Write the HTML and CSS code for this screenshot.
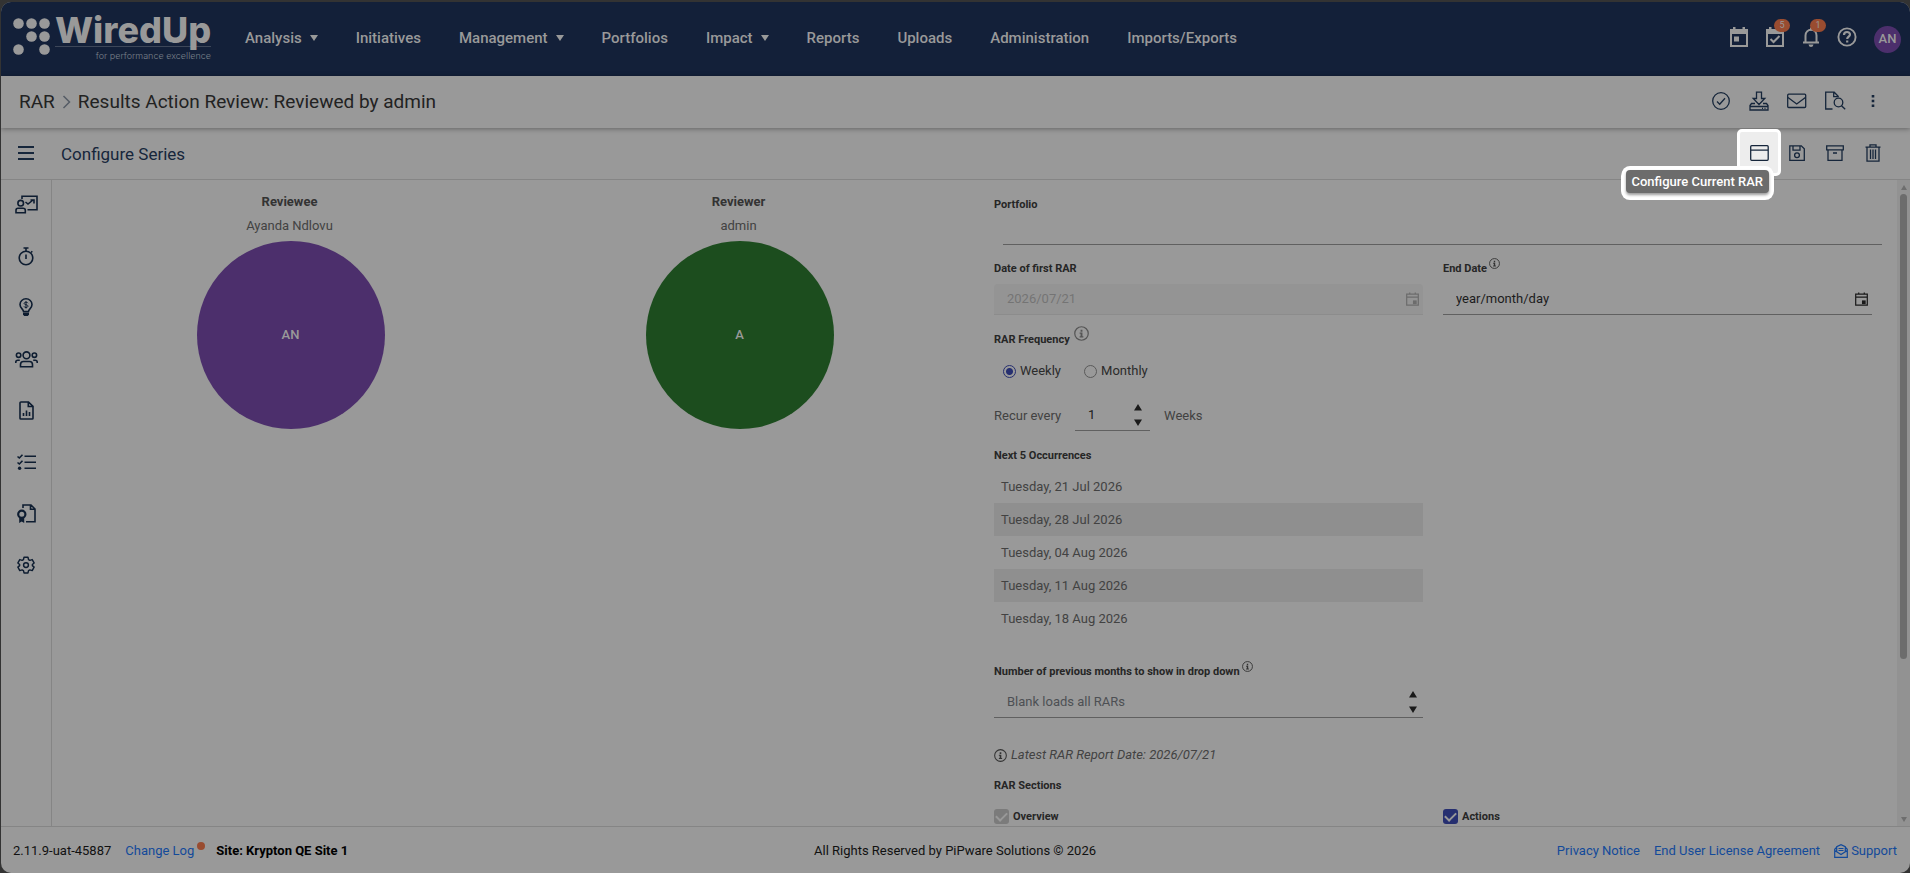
FILE: index.html
```html
<!DOCTYPE html>
<html lang="en">
<head>
<meta charset="utf-8">
<title>WiredUp - Results Action Review</title>
<link rel="stylesheet" href="styles.css">
</head>
<body>
<svg class="defs" aria-hidden="true">
  <symbol id="info" viewBox="0 0 16 16"><circle cx="8" cy="8" r="7.2" fill="none" stroke="currentColor" stroke-width="1.3"/><path d="M7 4h2v2H7zM6 7h3v4h1v1.2H6V11h1V8.200H6z" fill="currentColor"/></symbol>
  <symbol id="cal" viewBox="0 0 14 15"><path d="M.75 2.200h12.500v12H.75zM.75 5.500h12.500M4 .4v2M10 .4v2" fill="none" stroke="currentColor" stroke-width="1.3"/><path d="M7.500 9h4v4h-4z" fill="currentColor"/></symbol>
  <symbol id="spin" viewBox="0 0 8 22"><path d="M4 0l4 6.500H0zM0 15.500h8L4 22z" fill="currentColor"/></symbol>
</svg>
<div class="window">
  <header class="topbar">
    <a class="logo" href="#" aria-label="WiredUp home">
      <svg class="logo-dots" viewBox="0 0 38 38"><g fill="currentColor"><circle cx="5.500" cy="5.500" r="5.300"/><circle cx="18.500" cy="5.500" r="5.300"/><circle cx="31.500" cy="5.500" r="5.300"/><circle cx="18.500" cy="18.500" r="5.300"/><circle cx="31.500" cy="18.500" r="5.300"/><circle cx="5.500" cy="31.500" r="5.300"/><circle cx="31.500" cy="31.500" r="5.300"/></g></svg>
      <span class="logo-text"><span class="logo-name">WiredUp</span><span class="logo-tag">for performance excellence</span></span>
    </a>
    <nav class="menu">
      <a href="#">Analysis<i class="caret"></i></a>
      <a href="#">Initiatives</a>
      <a href="#">Management<i class="caret"></i></a>
      <a href="#">Portfolios</a>
      <a href="#">Impact<i class="caret"></i></a>
      <a href="#">Reports</a>
      <a href="#">Uploads</a>
      <a href="#">Administration</a>
      <a href="#">Imports/Exports</a>
    </nav>
    <div class="top-icons">
      <button class="top-btn" aria-label="Calendar"><svg width="18" height="20" viewBox="0 0 18 20"><path d="M1 3h16v16H1z" fill="none" stroke="currentColor" stroke-width="2"/><path d="M0 2h18v5H0zM3 0h2.500v3H3zM12.500 0H15v3h-2.500zM4 9.500h5v5H4z" fill="currentColor"/></svg></button>
      <button class="top-btn" aria-label="Tasks"><svg width="18" height="20" viewBox="0 0 18 20"><path d="M1 3h16v16H1zM4.500 12l3 3 6-6" fill="none" stroke="currentColor" stroke-width="2"/><path d="M0 2h18v5H0zM3 0h2.500v3H3zM12.500 0H15v3h-2.500z" fill="currentColor"/></svg><span class="badge">5</span></button>
      <button class="top-btn" aria-label="Notifications"><svg width="18" height="20" viewBox="0 0 18 20"><path d="M1 15.500h16M3.500 15V8.500C3.500 5 6 2.800 9 2.800s5.500 2.200 5.500 5.700V15" fill="none" stroke="currentColor" stroke-width="2"/><path d="M8 .5h2v3H8zM6.500 17.500h5Q11 20 9 20t-2.500-2.500z" fill="currentColor"/></svg><span class="badge">1</span></button>
      <button class="top-btn" aria-label="Help"><svg width="20" height="20" viewBox="0 0 20 20"><circle cx="10" cy="10" r="8.600" fill="none" stroke="currentColor" stroke-width="1.900"/><path d="M7 8c0-4 6-3.800 6-.4 0 2-2.800 2.100-2.800 4.400M10.200 13.400v2" fill="none" stroke="currentColor" stroke-width="2.200"/></svg></button>
      <button class="avatar-small">AN</button>
    </div>
  </header>

  <div class="titlebar">
    <h1 class="crumbs"><a href="#">RAR</a><svg width="9" height="14" viewBox="0 0 9 14"><path d="M1.500 1l6 6-6 6" fill="none" stroke="currentColor" stroke-width="1.500"/></svg><span>Results Action Review: Reviewed by admin</span></h1>
    <div class="tools">
      <button class="tool" aria-label="Approve"><svg width="18" height="18" viewBox="0 0 18 18"><circle cx="9" cy="9" r="8.300"/><path d="M5 9.500l2.700 2.700L13 6.200"/></svg></button>
      <button class="tool" aria-label="Download"><svg width="20" height="20" viewBox="0 0 20 20"><path d="M7.500 1.200h5v6.300h3.300L10 13.500 4.200 7.500h3.300zM6 12.500H2.500L1 14.500V19h18v-4.500l-1.500-2H14M1 15.500h18M13 17.300h1M15.500 17.300h1"/></svg></button>
      <button class="tool" aria-label="Email"><svg width="20" height="16" viewBox="0 0 20 16"><rect x=".7" y="1.200" width="18" height="13.300" rx="1"/><path d="M1 4.500l8.700 6.500 8.700-6.500"/></svg></button>
      <button class="tool" aria-label="Preview"><svg width="22" height="20" viewBox="0 0 22 20"><path d="M8.500 18H1.700V1.200h8.500l4 4v1M9.700 1.500v4.200h4"/><circle cx="14.500" cy="11.500" r="4.300"/><path d="M17.500 14.700l3.700 3.600"/></svg></button>
      <button class="tool" aria-label="More"><svg width="4" height="12" viewBox="0 0 4 12"><path class="solid" d="M.7 0h2.600v2.600H.7zM.7 4.700h2.600v2.600H.7zM.7 9.400h2.600V12H.7z"/></svg></button>
    </div>
  </div>

  <div class="subbar">
    <button class="hamburger" aria-label="Toggle menu"><svg width="16" height="14" viewBox="0 0 16 14"><path d="M0 1h16M0 7h16M0 13h16" stroke="currentColor" stroke-width="2"/></svg></button>
    <h2 class="subtitle">Configure Series</h2>
    <div class="tools">
      <button class="tool current" aria-label="Configure Current RAR"><svg width="19" height="16" viewBox="0 0 19 16"><rect x=".7" y=".7" width="17.500" height="14.600" rx="1"/><path d="M1 5.200h17"/></svg><span class="tooltip" role="tooltip">Configure Current RAR</span></button>
      <button class="tool" aria-label="Save"><svg width="16" height="16" viewBox="0 0 16 16"><path d="M.8.8h11.500l3 3v11.500H.8zM4 1v4.200h7V1"/><circle cx="8" cy="10.300" r="2.400"/></svg></button>
      <button class="tool" aria-label="Archive"><svg width="18" height="16" viewBox="0 0 18 16"><path d="M.7.800h16.600v4H.7zM2 5v10.300h14V5M7 8h4"/></svg></button>
      <button class="tool" aria-label="Delete"><svg width="16" height="18" viewBox="0 0 16 18"><path d="M.5 3.200h15M5 3V.8h6V3M2 3.500v13.700h12V3.500M5.500 5.500v9.500M8 5.500v9.500M10.500 5.500v9.500"/></svg></button>
    </div>
  </div>

  <div class="body">
    <nav class="sidebar">
      <button class="side" aria-label="Presentation"><svg width="23" height="19" viewBox="0 0 23 19"><path d="M7 4V1.200h15v13.500h-9.500"/><circle cx="5.700" cy="8.200" r="2.800"/><path d="M1 17.800v-2.500q0-2 2-2h5q2.300 0 2.300 2v2.500zM10.500 7l2.500 2 5-4M15.500 5H19v3.500"/></svg></button>
      <button class="side" aria-label="Timer"><svg width="16" height="19" viewBox="0 0 16 19"><circle cx="8" cy="11" r="6.800"/><path d="M5.500 1h5M8 1v3M8 7.500v4.500M13 5.500l1.300-1.300"/></svg></button>
      <button class="side" aria-label="Ideas"><svg width="14" height="19" viewBox="0 0 14 19"><path d="M4.500 13.500C4.500 11 1 10.500 1 6.500a6 5.700 0 0 1 12 0c0 4-3.500 4.500-3.500 7z"/><path d="M9 5.200Q8.500 4.200 7 4.200C4.500 4.200 4.500 6.500 7 6.700c2.600.2 2.600 2.800 0 2.800Q5.400 9.500 5 8.400M7 3.200v7.300" stroke-width="1"/><path class="solid" d="M4 14.500h6v2L8.800 18H5.200L4 16.500z"/></svg></button>
      <button class="side" aria-label="Team"><svg width="23" height="17" viewBox="0 0 23 17"><circle cx="11.500" cy="4.300" r="3.400"/><circle cx="3.600" cy="4.200" r="2.200"/><circle cx="19.400" cy="4.200" r="2.200"/><path d="M5.500 15.800v-2.300q0-3 3-3h6q3 0 3 3v2.300zM.8 12v-1q0-1.800 2-1.800h2M22.200 12v-1q0-1.800-2-1.800h-2"/></svg></button>
      <button class="side" aria-label="Reports"><svg width="15" height="19" viewBox="0 0 15 19"><path d="M2 1h7.500L14 5.300v11.900q0 .8-.8.8H1.800q-.8 0-.8-.8V1.800Q1 1 2 1zM9.300 1.300v4.200H14M4.500 15v-3M7.500 15V9.500M10.500 15v-4"/></svg></button>
      <button class="side" aria-label="Checklist"><svg width="19" height="16" viewBox="0 0 19 16"><path d="M7.500 2.300H19M7.500 8.300H19M7.500 14.300H19M.5 2.500L2.300 4 5.500.700M.5 8.500l1.800 1.500 3.200-3.300"/><circle class="solid" cx="2.600" cy="14.200" r="1.700"/></svg></button>
      <button class="side" aria-label="Certificates"><svg width="19" height="19" viewBox="0 0 19 19"><path d="M6 4V1h8l4 4v12.800H9M13.500 1.300v4H18"/><circle cx="4.800" cy="10.200" r="3.600" stroke-width="2.200"/><path class="solid" d="M2.200 13.500h5V19l-2.500-1.500L2.200 19z"/></svg></button>
      <button class="side" aria-label="Settings"><svg width="18" height="18" viewBox="0 0 20 20"><path d="M7.800 1.300h4.400l.6 2.600 1.500.9 2.600-.8 2.100 3.700L17.100 9.500v1.200l1.900 1.700-2.100 3.800-2.600-.8-1.500.9-.6 2.500H7.800l-.6-2.500-1.500-.9-2.600.8L1 12.400l1.900-1.700V9.500L1 7.700 3.100 4l2.600.8 1.500-.9z" stroke-linejoin="round"/><circle cx="10" cy="10.100" r="2.700"/></svg></button>
    </nav>

    <main class="content">
      <section class="people">
        <div class="person"><strong>Reviewee</strong><span>Ayanda Ndlovu</span><div class="avatar purple">AN</div></div>
        <div class="person"><strong>Reviewer</strong><span>admin</span><div class="avatar green">A</div></div>
      </section>

      <form class="form">
        <div class="field portfolio"><label class="label" for="portfolio">Portfolio</label><input class="input" id="portfolio" type="text"></div>
        <div class="pair">
          <div class="field"><label class="label" for="first">Date of first RAR</label>
            <div class="box disabled"><input class="input" id="first" type="text" value="2026/07/21" disabled><svg class="cal"><use href="#cal"/></svg></div></div>
          <div class="field"><label class="label" for="end">End Date<svg class="info"><use href="#info"/></svg></label>
            <div class="box"><input class="input" id="end" type="text" value="year/month/day"><svg class="cal"><use href="#cal"/></svg></div></div>
        </div>
        <div class="field frequency" role="radiogroup" aria-labelledby="freq">
          <span class="label" id="freq">RAR Frequency<svg class="info large"><use href="#info"/></svg></span>
          <div class="radios"><label><input type="radio" name="freq" checked>Weekly</label><label><input type="radio" name="freq">Monthly</label></div>
        </div>
        <div class="recur"><label for="every">Recur every</label><div class="box short"><input class="input" id="every" type="text" inputmode="numeric" value="1"><svg class="spin"><use href="#spin"/></svg></div><span>Weeks</span></div>
        <div class="field occurrences"><span class="label">Next 5 Occurrences</span>
          <ul class="dates"><li>Tuesday, 21 Jul 2026</li><li>Tuesday, 28 Jul 2026</li><li>Tuesday, 04 Aug 2026</li><li>Tuesday, 11 Aug 2026</li><li>Tuesday, 18 Aug 2026</li></ul></div>
        <div class="field months"><label class="label" for="months">Number of previous months to show in drop down<svg class="info"><use href="#info"/></svg></label>
          <div class="box"><input class="input" id="months" type="text" inputmode="numeric" placeholder="Blank loads all RARs"><svg class="spin"><use href="#spin"/></svg></div></div>
        <p class="latest"><svg class="info"><use href="#info"/></svg>Latest RAR Report Date: 2026/07/21</p>
        <div class="sections"><span class="label">RAR Sections</span>
          <div class="pair"><label class="check"><input type="checkbox" checked disabled>Overview</label><label class="check"><input type="checkbox" checked>Actions</label></div></div>
      </form>
    </main>
    <div class="scrollbar" aria-hidden="true"><i class="arrow up"></i><i class="thumb"></i><i class="arrow down"></i></div>
  </div>

  <footer class="footer">
    <div class="foot-left"><span>2.11.9-uat-45887</span><a class="changelog" href="#">Change Log<i class="dot"></i></a><strong>Site: Krypton QE Site 1</strong></div>
    <span>All Rights Reserved by PiPware Solutions © 2026</span>
    <div class="foot-right"><a href="#">Privacy Notice</a><a href="#">End User License Agreement</a><a class="support" href="#"><svg width="14" height="14" viewBox="0 0 14 14"><path d="M.7 5.200L2.500 3.500M13.300 5.200l-1.800-1.700M.7 5v8.300h12.600V5M.7 6.500L7 10.500l6.300-4M2.700 7.500V2.700L7 .7l4.300 2v4.800M4.500 4.500h5M4.500 6.500h5" fill="none" stroke="currentColor" stroke-width="1.200"/></svg>Support</a></div>
  </footer>
</div>
</body>
</html>
```

FILE: styles.css
```css
* { box-sizing: border-box; }
body { margin: 0; background: #333; font-family: Roboto, "Liberation Sans", sans-serif; font-size: 13px; line-height: 16px; color: #424242; }
button { border: 0; padding: 0; background: none; color: inherit; font: inherit; }
a { text-decoration: none; color: inherit; }
h1, h2, p, ul { margin: 0; padding: 0; font-weight: 400; }
.defs { display: none; }

.window { display: flex; flex-direction: column; height: calc(100vh - 2px); margin: 2px 0 0 1px; border-radius: 10px; overflow: hidden; background: #999; }

.topbar { display: flex; align-items: center; flex: none; height: 74px; padding: 0 9px 0 12px; background: #132039; color: #999; }
.logo { display: flex; width: 198px; height: 50px; margin-right: 34px; }
.logo-dots { flex: none; width: 38px; height: 38px; margin: 4px 4px 0 0; }
.logo-text { display: flex; flex-direction: column; width: 156px; }
.logo-name { height: 34px; border-bottom: 1px solid #3d4759; font: 800 36px/32px Inter, sans-serif; }
.logo-tag { font: 300 9px/17px Inter, sans-serif; color: #7a808b; text-align: right; }
.menu { display: flex; align-items: center; flex: 1; gap: 38px; height: 100%; padding-bottom: 2px; font-size: 15px; font-weight: 500; white-space: nowrap; }
.menu a { display: flex; align-items: center; gap: 8px; }
.caret { border: 4px solid transparent; border-top: 6px solid #999; border-bottom: 0; }
.top-icons { display: flex; align-items: center; }
.top-btn { position: relative; display: flex; align-items: center; justify-content: center; width: 36px; height: 26px; padding-bottom: 4px; }
.badge { position: absolute; top: -7px; left: 17px; width: 16px; height: 13px; border-radius: 7px; background: #994c30; font-size: 9px; line-height: 13px; }
.avatar-small { width: 27px; height: 27px; margin-left: 9px; border-radius: 50%; background: #4c2f6c; font-size: 13px; font-weight: 500; }

.titlebar { display: flex; align-items: center; justify-content: space-between; flex: none; position: relative; height: 52px; padding: 0 18px; box-shadow: 0 1px 5px rgba(0,0,0,.35); color: #16263b; }
.crumbs { display: flex; align-items: center; gap: 7px; font-size: 19px; line-height: 24px; color: #222; }
.crumbs svg { color: #555c66; }
.tools { display: flex; }
.tool { position: relative; display: flex; align-items: center; justify-content: center; width: 38px; height: 44px; padding-bottom: 2px; }
.tool svg { position: relative; fill: none; stroke: currentColor; stroke-width: 1.3; }
.tool .solid, .side .solid { fill: currentColor; stroke: none; }

.subbar { display: flex; align-items: center; flex: none; height: 52px; padding-right: 18px; border-bottom: 1px solid #858585; color: #16263b; }
.hamburger { width: 50px; padding-top: 2px; }
.subtitle { flex: 1; padding-left: 10px; font-size: 17px; line-height: 20px; }
.subbar .current::before { content: ""; position: absolute; inset: -3px -3px 0; border: 3px solid #fff; border-radius: 5px; background: #ededed; }
.tooltip { position: absolute; top: 38px; right: 9px; padding: 0 6px; border-radius: 4px; background: #6c6c6c; color: #fff; font-size: 13px; font-weight: 500; line-height: 23px; white-space: nowrap; box-shadow: 0 2px 3px rgba(0,0,0,.4), 0 0 0 4px #fff, 0 2px 0 5px #fff; }

.body { display: flex; flex: 1; min-height: 0; }
.sidebar { display: grid; grid-template-rows: repeat(4, 51px 52px); align-content: start; flex: none; width: 51px; border-right: 1px solid #858585; color: #0e1d31; }
.side { display: flex; align-items: center; justify-content: center; padding-bottom: 2px; }
.side svg { fill: none; stroke: currentColor; stroke-width: 1.6; }

.content { display: grid; grid-template-columns: 1fr 1fr; gap: 21px; flex: 1; min-width: 0; padding: 0 15px 0 13px; overflow: hidden; }
.people { display: grid; grid-template-columns: 1fr 1fr; align-items: start; padding-top: 14px; text-align: center; }
.person { display: flex; flex-direction: column; align-items: center; }
.person strong { margin-bottom: 8px; font-weight: 700; color: #333; }
.avatar { display: grid; place-items: center; width: 188px; height: 188px; margin: 7px 0 0 2px; border-radius: 50%; color: #999; font-weight: 500; }
.purple { background: #4c2f6c; }
.green { background: #1c4d1e; }

.form { padding-top: 17px; }
.field { padding: 0 10px; }
.label { display: flex; align-items: flex-start; height: 16px; font-size: 11px; font-weight: 700; color: #262626; }
.info { flex: none; width: 11px; height: 11px; margin: -3px 0 0 2px; color: #333; }
.info.large { width: 15px; height: 15px; margin: -6px 0 0 4px; color: #555; }
.input { flex: 1; min-width: 0; width: 100%; border: 0; outline: 0; padding: 0; background: none; color: #1c1c1c; font: inherit; }
.input::placeholder { color: #4d5054; opacity: 1; }
.portfolio { padding-right: 0; }
.portfolio .input { display: block; width: calc(100% - 9px); height: 32px; margin-left: 9px; border-bottom: 1px solid #606060; }
.pair { display: grid; grid-template-columns: 1fr 1fr; }
.form > .pair { margin-top: 16px; }
.box { display: flex; align-items: center; height: 31px; margin-top: 7px; padding: 0 4px 0 13px; border-bottom: 1px solid #606060; color: #1a1a1a; }
.box.disabled { border-radius: 4px 4px 0 0; background: #949494; border-color: #8c8c8c; color: #6c6c6c; }
.disabled .input { color: #747474; }
.cal { width: 13px; height: 14px; }
.spin { width: 8px; height: 22px; margin-right: 2px; }
.frequency { margin-top: 17px; }
.radios { display: flex; gap: 23px; margin: 14px 0 0 9px; color: #2b2b2b; }
.radios label { display: flex; align-items: center; gap: 4px; height: 18px; }
.radios input { appearance: none; width: 13px; height: 13px; margin: 0; border: 1px solid #5a5a5a; border-radius: 50%; }
.radios input:checked { border-color: #262f70; background: radial-gradient(#262f70 3px, transparent 4px); }
.recur { display: flex; align-items: center; gap: 14px; margin-top: 20px; padding: 0 10px; }
.box.short { width: 75px; height: 31px; margin-top: 0; padding-right: 6px; }
.occurrences { margin-top: 17px; }
.dates { width: calc(50% - 10px); margin-top: 6px; list-style: none; }
.dates li { height: 33px; padding: 0 7px; line-height: 33px; }
.dates li:nth-child(even) { background: #8f8f8f; }
.months { width: 50%; margin-top: 29px; }
.latest { display: flex; align-items: center; gap: 4px; margin-top: 28px; padding: 0 10px; font-style: italic; line-height: 18px; }
.latest .info { width: 13px; height: 13px; margin: 0; }
.sections { margin-top: 14px; }
.sections > .label { padding: 0 10px; }
.check { display: flex; align-items: center; gap: 4px; height: 15px; margin-top: 15px; padding: 0 10px; font-size: 11px; font-weight: 700; color: #262626; }
.check input { appearance: none; display: grid; place-items: center; width: 15px; height: 15px; margin: 0; border-radius: 3px; background: #262f70; }
.check input::after { content: ""; width: 9px; height: 5px; margin-bottom: 3px; border: solid #999; border-width: 0 0 2px 2px; transform: rotate(-45deg); }
.check input:disabled { background: #7b7b7b; }

.scrollbar { display: flex; flex-direction: column; align-items: center; flex: none; width: 13px; padding: 5px 0 4px; background: #929292; }
.arrow { border: 3px solid transparent; }
.up { border-top: 0; border-bottom: 5px solid #6e6e6e; }
.down { margin-top: auto; border-bottom: 0; border-top: 5px solid #6e6e6e; }
.thumb { width: 7px; height: 73%; margin-top: 4px; border-radius: 4px; background: #6c6c6c; }

.footer { display: grid; grid-template-columns: 1fr auto 1fr; align-items: center; flex: none; height: 47px; padding: 2px 13px 0 12px; border-top: 1px solid #858585; color: #111; }
.foot-left, .foot-right { display: flex; gap: 14px; }
.foot-right { justify-content: flex-end; }
.footer a { color: #134a9a; }
.footer strong { color: #000; }
.changelog { position: relative; padding-right: 8px; }
.dot { position: absolute; top: -1px; right: -3px; width: 8px; height: 8px; border-radius: 50%; background: #994c30; }
.support { display: flex; align-items: center; gap: 3px; }
```
